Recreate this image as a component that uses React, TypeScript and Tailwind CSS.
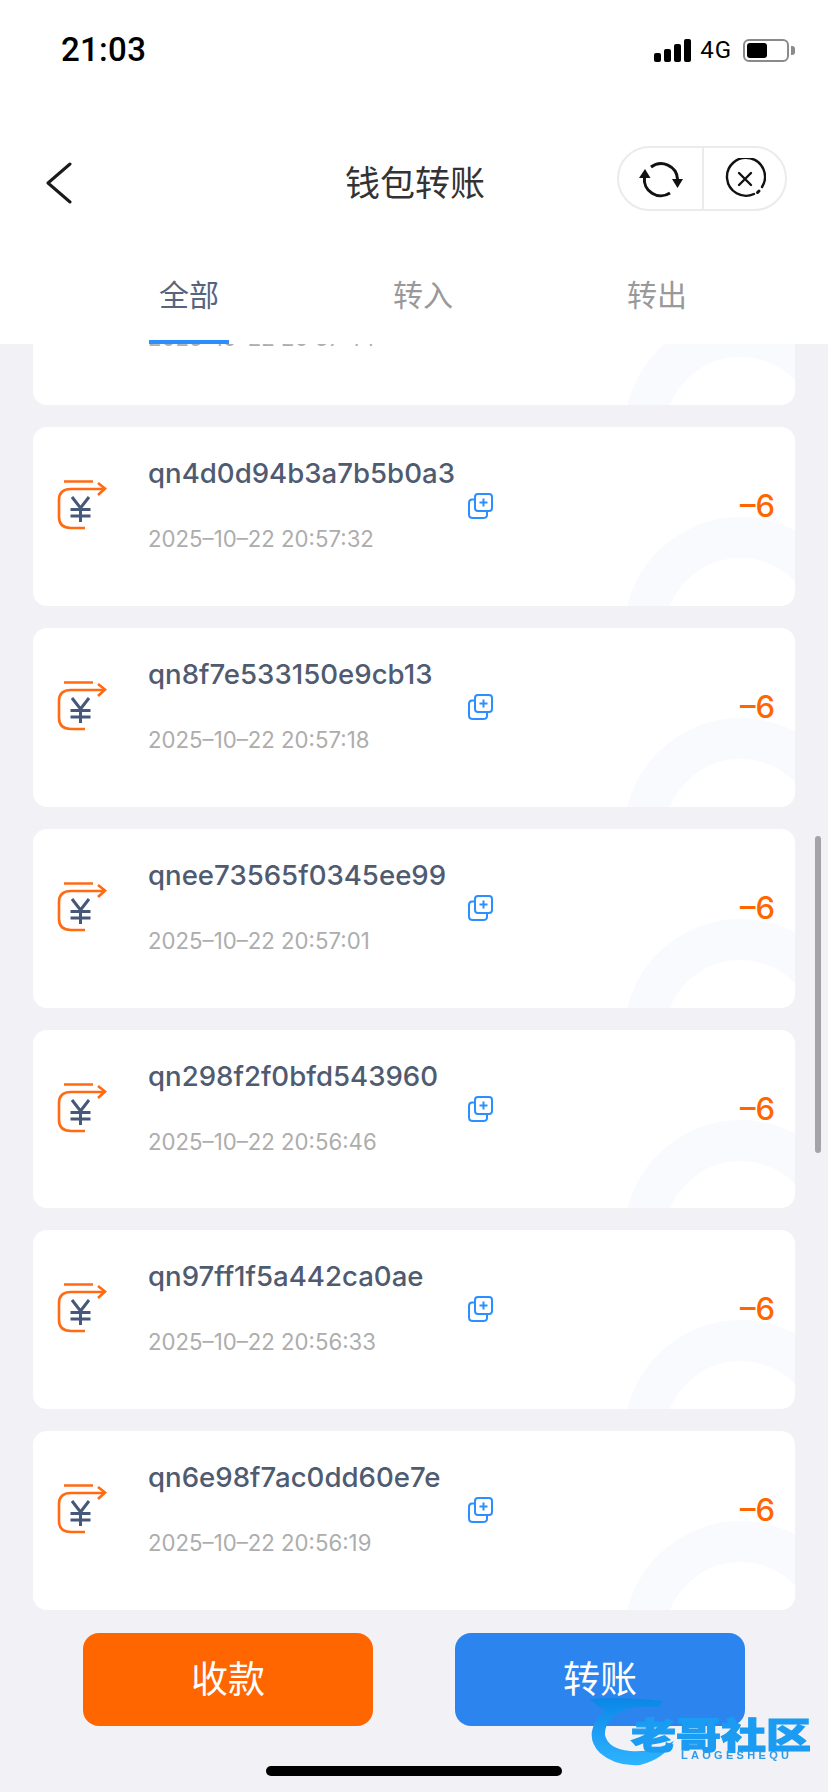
const rows = [
  { id: "qn4d0d94b3a7b5b0a3", time: "2025–10–22 20:57:32" },
  { id: "qn8f7e533150e9cb13", time: "2025–10–22 20:57:18" },
  { id: "qnee73565f0345ee99", time: "2025–10–22 20:57:01" },
  { id: "qn298f2f0bfd543960", time: "2025–10–22 20:56:46" },
  { id: "qn97ff1f5a442ca0ae", time: "2025–10–22 20:56:33" },
  { id: "qn6e98f7ac0dd60e7e", time: "2025–10–22 20:56:19" },
];

const sans = "font-['Inter','Liberation_Sans','Noto_Sans_CJK_SC',sans-serif]";

function StatusBar() {
  return (
    <div className="flex h-[100px] items-start justify-between pl-[61px] pr-[33px] pt-[33px]">
      <span className="font-['Roboto',sans-serif] text-[33px] leading-[34px] font-medium text-black tracking-[0.3px]">21:03</span>
      <div className="flex items-center">
        <div className="flex items-end gap-[3px] h-[23px] mt-[5px]">
          <span className="w-[7px] h-[9px] rounded-[2px] bg-black" />
          <span className="w-[7px] h-[13px] rounded-[2px] bg-black" />
          <span className="w-[7px] h-[18px] rounded-[2px] bg-black" />
          <span className="w-[7px] h-[23px] rounded-[2px] bg-black" />
        </div>
        <span className="ml-[9px] font-['Roboto',sans-serif] text-[24px] leading-[24px] tracking-[1px] text-black mt-[5px]">4G</span>
        <div className="ml-[11px] mt-[5px] w-[46px] h-[23px] rounded-[6px] border-2 border-[#8a8a8a] p-[2px]">
          <div className="w-[20px] h-full rounded-[3px] bg-black" />
        </div>
        <span className="ml-[2px] mt-[5px] w-[4px] h-[9px] rounded-r-[3px] bg-[#8a8a8a]" />
      </div>
    </div>
  );
}

function Capsule() {
  return (
    <div className="flex w-[170px] h-[65px] rounded-full border-2 border-[#ebebeb] bg-white">
      <div className="flex w-[85px] shrink-0 items-center justify-center border-r-2 border-[#ebebeb]">
        <svg width="46" height="40" viewBox="0 0 46 40" fill="none" className="text-[#111]">
          <path d="M6.5 18 A16.5 16.5 0 0 0 32 34" stroke="currentColor" strokeWidth="3" />
          <path d="M13 8 A16.5 16.5 0 0 1 39.5 20" stroke="currentColor" strokeWidth="3" />
          <path d="M1 19 L7 10 L12.5 19 Z" fill="currentColor" />
          <path d="M34 20 L45 20 L39.5 29 Z" fill="currentColor" />
        </svg>
      </div>
      <div className="flex flex-1 items-center justify-center">
        <svg width="42" height="42" viewBox="0 0 42 42" fill="none" stroke="#111" strokeWidth="2.4" strokeLinecap="round">
          <path d="M30 36 A19 19 0 1 1 38 29" />
          <path d="M35 33 L33.5 34.5" strokeWidth="3" />
          <path d="M15 15 L27 27 M27 15 L15 27" />
        </svg>
      </div>
    </div>
  );
}

function Header() {
  return (
    <header className={`relative z-10 h-[344px] shrink-0 bg-white ${sans}`}>
      <StatusBar />
      <div className="mt-[46px] grid h-[65px] grid-cols-[1fr_auto_1fr] items-center pl-[46px] pr-[41px]">
        <svg width="26" height="42" viewBox="0 0 26 42" fill="none" stroke="#1a1a1a" strokeWidth="3" strokeLinecap="round" strokeLinejoin="round" className="mt-[8px]">
          <path d="M24 2 L2 21 L24 40" />
        </svg>
        <h1 className="text-[35px] leading-[40px] font-normal text-[#333] mt-[8px] mr-[3px]">钱包转账</h1>
        <div className="flex justify-end"><Capsule /></div>
      </div>
      <div className="ml-[72px] mt-[62px] flex">
        <Tab label="全部" active />
        <Tab label="转入" />
        <Tab label="转出" />
      </div>
    </header>
  );
}

function Tab({ label, active }: { label: string; active?: boolean }) {
  return (
    <div className={`relative h-[44px] w-[234px] shrink-0 text-center text-[30px] leading-[44px] ${active ? "text-[#56647e]" : "text-[#999]"}`}>
      {label}
      {active && <span className="absolute left-[77px] top-[67px] h-[4px] w-[80px] bg-[#2b8fff]" />}
    </div>
  );
}

function TransferIcon() {
  return (
    <svg width="50" height="50" viewBox="0 0 50 50" fill="none" className="shrink-0">
      <path d="M7 1.5 H36" stroke="#ff6a13" strokeWidth="2.4" />
      <path d="M48 9 H14 Q2 9 2 20 V37 Q2 48 14 48 H28" stroke="#ff6a13" strokeWidth="2.6" />
      <path d="M41 3 L48 8.5 L41 15" stroke="#ff6a13" strokeWidth="2.6" />
      <path d="M15 17 L23.5 28 L32 17 M13.5 29.5 H33.5 M13.5 36 H33.5 M23.5 28 V42" stroke="#46587a" strokeWidth="3" />
    </svg>
  );
}

function CopyIcon() {
  return (
    <svg width="25" height="26" viewBox="0 0 25 26" fill="none" stroke="#2b8fff" strokeWidth="2" className="shrink-0">
      <rect x="7" y="1" width="17" height="17" rx="3" />
      <path d="M7 6.5 H4 Q1 6.5 1 10 V21.5 Q1 25 5 25 H15 Q19 25 19 22 V18" />
      <path d="M15.5 5.5 V13.5 M11.5 9.5 H19.5" />
    </svg>
  );
}

function Card({ id, time }: { id: string; time: string }) {
  return (
    <div className="relative h-[178.85px] shrink-0 overflow-hidden rounded-[14px] bg-white">
      <span className="absolute right-[-62px] top-[90px] h-[233px] w-[233px] rounded-full border-[41px] border-[#f9fafd]" />
      <div className="relative flex h-full pl-[24px] pr-[20px]">
        <div className="mt-[53px]"><TransferIcon /></div>
        <div className="ml-[41px] w-[320px] shrink-0 pt-[28px]">
          <div className="text-[27.6px] leading-[36px] font-medium text-[#4f5b70] font-['Inter','Liberation_Sans',sans-serif] whitespace-nowrap">{id}</div>
          <div className="mt-[33px] text-[22.2px] leading-[30px] text-[#adadad] font-['Inter','Liberation_Sans',sans-serif] whitespace-nowrap">{time}</div>
        </div>
        <div className="mt-[66px]"><CopyIcon /></div>
        <div className="ml-auto mt-[59px] text-[31px] leading-[40px] font-medium text-[#ff6600] font-['Inter','Liberation_Sans',sans-serif]">–6</div>
      </div>
    </div>
  );
}

function Watermark() {
  return (
    <div className="pointer-events-none absolute left-[590px] top-[1693px] h-[80px] w-[225px] blur-[0.6px]">
      <svg width="90" height="80" viewBox="0 0 90 80" className="absolute left-0 top-0">
        <defs>
          <linearGradient id="swoosh" x1="0" y1="0" x2="0" y2="1">
            <stop offset="0" stopColor="#0a86e8" />
            <stop offset="1" stopColor="#2eb4ff" />
          </linearGradient>
        </defs>
        <path d="M0 6 Q30 3 72 8 L70 14 Q44 12 32 18 Q14 28 15 42 Q18 56 40 58 Q62 60 84 48 Q74 66 50 72 Q26 74 10 60 Q0 50 2 38 Q4 26 16 18 Q8 14 0 6 Z" fill="url(#swoosh)" />
      </svg>
      <div className="absolute left-[41px] top-[18px] origin-center scale-y-[0.8] whitespace-nowrap text-[45px] leading-[46px] font-black text-[#1b9cf2] [-webkit-text-stroke:1.5px_#1b9cf2] font-['Noto_Sans_CJK_SC',sans-serif]">老哥社区</div>
      <div className="absolute left-[91px] top-[56px] whitespace-nowrap text-[11px] leading-[12px] font-bold tracking-[3.3px] text-[#2f9be8] font-['Liberation_Sans',sans-serif]">LAOGESHEQU</div>
    </div>
  );
}

export default function App() {
  return (
    <div className={`relative flex h-[1792px] w-[828px] flex-col overflow-hidden bg-[#f1f1f6] ${sans}`}>
      <Header />
      <main className="h-[1289px] shrink-0 overflow-hidden">
        <div className="mt-[-117.85px] flex flex-col gap-[22px] px-[33px]">
          <Card id="qn0c1a52e8d47b6f09" time="2025–10–22 20:57:44" />
          {rows.map((r) => (
            <Card key={r.id} id={r.id} time={r.time} />
          ))}
        </div>
      </main>
      <div className="flex justify-between px-[83px]">
        <button className="h-[93px] w-[290px] rounded-[16px] bg-[#ff6600] text-[37px] text-white">收款</button>
        <button className="h-[93px] w-[290px] rounded-[16px] bg-[#2c85ee] text-[37px] text-white">转账</button>
      </div>
      <div className="mx-auto mt-[40px] h-[10px] w-[296px] rounded-full bg-black" />
      <span className="absolute right-[7px] top-[836px] h-[317px] w-[6px] rounded-full bg-[#a4a4a8]" />
      <Watermark />
    </div>
  );
}
